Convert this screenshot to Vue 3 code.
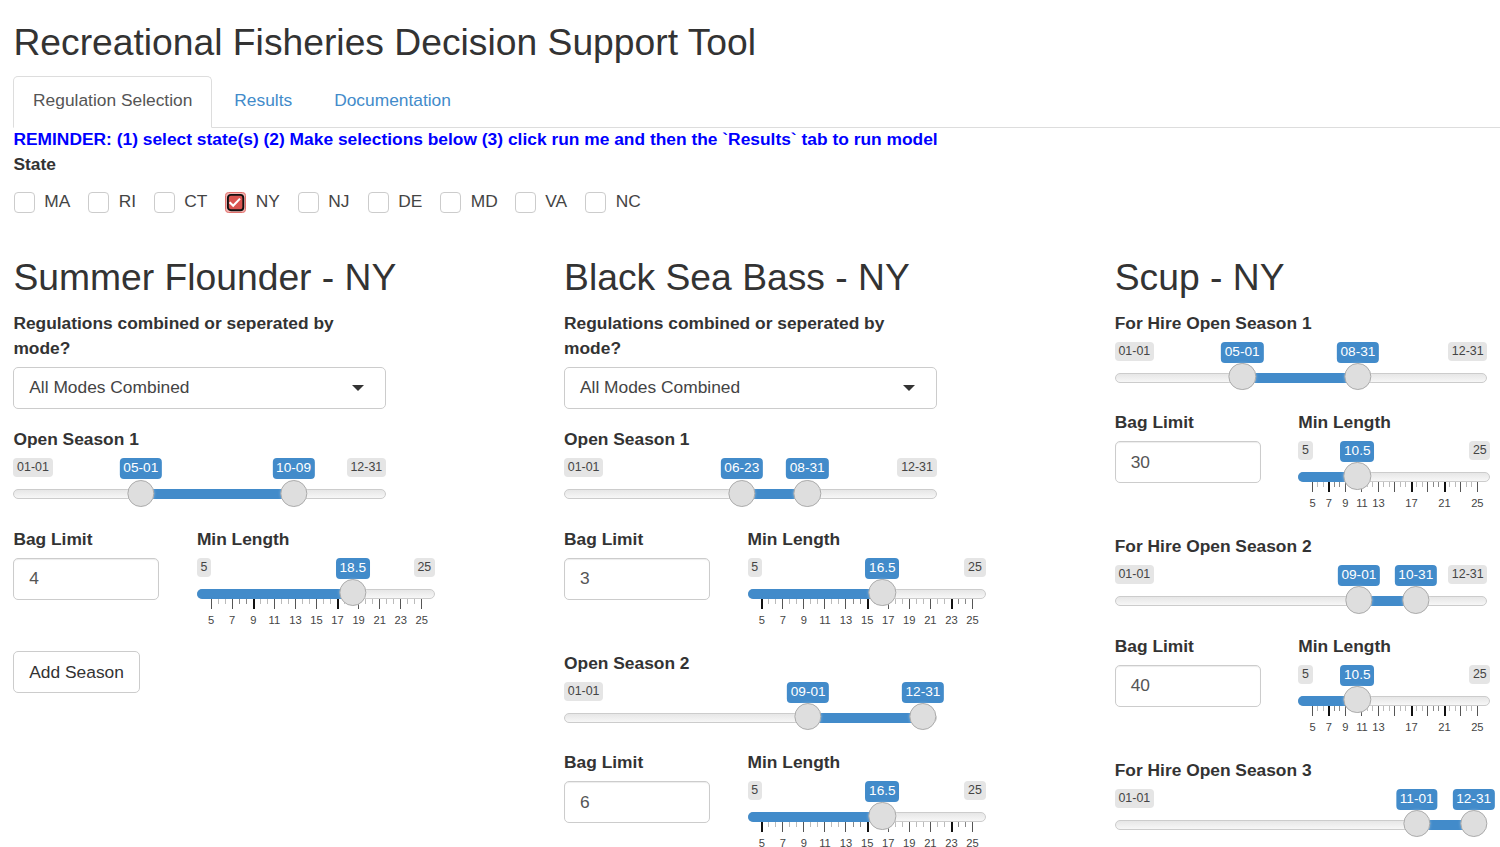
<script setup>
const states = ['MA', 'RI', 'CT', 'NY', 'NJ', 'DE', 'MD', 'VA', 'NC']
const selectedState = 'NY'

const monthStart = [0, 31, 59, 90, 120, 151, 181, 212, 243, 273, 304, 334]
const dayFraction = (date) => {
  const [month, day] = date.split('-').map(Number)
  return (monthStart[month - 1] + day - 1) / 364
}

const HANDLE = 27.3
const at = (fraction) => `calc(${HANDLE / 2}px + (100% - ${HANDLE}px) * ${fraction})`
const span = (a, b) => `calc((100% - ${HANDLE}px) * ${b - a})`
const lengthFraction = (v) => (v - 5) / 20

const makeTicks = (strong, denser) => {
  const ticks = []
  for (let i = 0; i <= 30; i++) {
    const value = 5 + (i * 2) / 3
    const major = i % 3 === 0
    const rounded = Math.round(value)
    ticks.push({
      pos: i / 30,
      major,
      strong: major && strong.includes(rounded),
      denser: !major && denser.includes(Math.floor(i / 3)),
    })
  }
  return ticks
}

const odd = [5, 7, 9, 11, 13, 15, 17, 19, 21, 23, 25]
const sparse = [5, 7, 9, 11, 13, 17, 21, 25]

const species = [
  {
    name: 'Summer Flounder',
    mode: true,
    addButton: true,
    wide: true,
    ticks: makeTicks([9, 17], [1]),
    labels: odd,
    seasons: [{ label: 'Open Season 1', from: '05-01', to: '10-09', bag: 4, length: 18.5 }],
  },
  {
    name: 'Black Sea Bass',
    mode: true,
    wide: true,
    ticks: makeTicks([5, 15, 23], [4, 9]),
    labels: odd,
    seasons: [
      { label: 'Open Season 1', from: '06-23', to: '08-31', bag: 3, length: 16.5 },
      { label: 'Open Season 2', from: '09-01', to: '12-31', bag: 6, length: 16.5 },
    ],
  },
  {
    name: 'Scup',
    ticks: makeTicks([7, 17, 21], [1, 7]),
    labels: sparse,
    seasons: [
      { label: 'For Hire Open Season 1', from: '05-01', to: '08-31', bag: 30, length: 10.5 },
      { label: 'For Hire Open Season 2', from: '09-01', to: '10-31', bag: 40, length: 10.5 },
      { label: 'For Hire Open Season 3', from: '11-01', to: '12-31' },
    ],
  },
]
</script>

<template>
  <div class="page">
    <h2 class="title">Recreational Fisheries Decision Support Tool</h2>
    <nav class="tabs">
      <a class="tab active">Regulation Selection</a>
      <a class="tab">Results</a>
      <a class="tab">Documentation</a>
    </nav>
    <div class="reminder">REMINDER: (1) select state(s) (2) Make selections below (3) click run me and then the `Results` tab to run model</div>
    <div class="label state-label">State</div>
    <div class="states">
      <div v-for="s in states" :key="s" class="state">
        <span class="box" :class="{ checked: s === selectedState }">
          <svg v-if="s === selectedState" viewBox="0 0 21 21" width="21" height="21">
            <rect x="0.5" y="0.5" width="20" height="20" rx="3" fill="#f3b5b3" stroke="#e0706c" />
            <rect x="2.9" y="2.9" width="15.4" height="15.4" rx="3" fill="#d9534f" stroke="#111" stroke-width="1.9" />
            <path d="M4.6 10.2l3.6 3.6 6.8-7.2" fill="none" stroke="#fff" stroke-width="2.1" />
          </svg>
        </span>
        <span class="state-name">{{ s }}</span>
      </div>
    </div>

    <div class="columns">
      <section v-for="sp in species" :key="sp.name" class="column">
        <h2 class="heading">{{ sp.name }} - NY</h2>

        <div v-if="sp.mode" class="group">
          <div class="label">Regulations combined or seperated by<br>mode?</div>
          <div class="select">
            <span>All Modes Combined</span>
            <svg class="caret" viewBox="0 0 12 6" width="12" height="6"><path d="M0 0h12L6 6z" fill="#333" /></svg>
          </div>
        </div>

        <template v-for="season in sp.seasons" :key="season.label">
          <div class="group">
            <div class="label">{{ season.label }}</div>
            <div class="slider">
              <span class="bound low">01-01</span>
              <span v-if="season.to !== '12-31'" class="bound high">12-31</span>
              <div class="track"></div>
              <div class="bar" :style="{ left: at(dayFraction(season.from)), width: span(dayFraction(season.from), dayFraction(season.to)) }"></div>
              <span class="value" :style="{ left: at(dayFraction(season.from)) }">{{ season.from }}</span>
              <span class="value" :style="{ left: at(dayFraction(season.to)) }">{{ season.to }}</span>
              <i class="handle" :style="{ left: at(dayFraction(season.from)) }"></i>
              <i class="handle" :style="{ left: at(dayFraction(season.to)) }"></i>
            </div>
          </div>

          <div v-if="season.bag" class="limits">
            <div class="bag">
              <div class="label">Bag Limit</div>
              <div class="input">{{ season.bag }}</div>
            </div>
            <div class="length" :class="{ wide: sp.wide }">
              <div class="label">Min Length</div>
              <div class="slider gridded">
                <span class="bound low">5</span>
                <span class="bound high">25</span>
                <div class="track"></div>
                <div class="bar start" :style="{ width: at(lengthFraction(season.length)) }"></div>
                <i
                  v-for="(t, i) in sp.ticks"
                  :key="i"
                  class="tick"
                  :class="{ major: t.major, strong: t.strong, denser: t.denser }"
                  :style="{ left: at(t.pos) }"
                ></i>
                <span v-for="n in sp.labels" :key="n" class="tick-label" :style="{ left: at(lengthFraction(n)) }">{{ n }}</span>
                <span class="value" :style="{ left: at(lengthFraction(season.length)) }">{{ season.length }}</span>
                <i class="handle" :style="{ left: at(lengthFraction(season.length)) }"></i>
              </div>
            </div>
          </div>
        </template>

        <button v-if="sp.addButton" class="button">Add Season</button>
      </section>
    </div>
  </div>
</template>

<style>
body {
  margin: 0;
  overflow: hidden;
  background: #fff;
}
</style>

<style scoped>
.page {
  box-sizing: border-box;
  width: 1500px;
  height: 847px;
  overflow: hidden;
  padding: 22.4px 0 0 13.4px;
  font-family: "Liberation Sans", Arial, sans-serif;
  font-size: 17.38px;
  line-height: 24.83px;
  color: #333;
}
.title,
.heading {
  margin: 0 0 12.4px;
  font-size: 37.25px;
  line-height: 41px;
  font-weight: 400;
  white-space: nowrap;
}
.title {
  margin-bottom: 12.8px;
}
.heading {
  margin-bottom: 13px;
}
.tabs {
  box-sizing: border-box;
  display: flex;
  gap: 2.6px;
  height: 51.6px;
  border-bottom: 1px solid #ddd;
}
.tab {
  box-sizing: border-box;
  height: 51.6px;
  padding: 11.2px 18.7px 0;
  border: 1px solid transparent;
  color: #428bca;
}
.tab.active {
  border-color: #ddd;
  border-bottom-color: #fff;
  border-radius: 5px 5px 0 0;
  background: #fff;
  color: #555;
}
.reminder {
  margin-top: -0.6px;
  color: #00f;
  font-weight: 700;
  letter-spacing: 0.01px;
  white-space: nowrap;
}
.label {
  margin-bottom: 6.2px;
  font-weight: 700;
  white-space: nowrap;
}
.state-label {
  margin-bottom: 0;
}
.states {
  display: grid;
  grid-template-columns: 74.5px 65.5px 71.5px 72.5px 70px 72.5px 74.5px 70.5px 80px;
  height: 80px;
  padding: 12px 0 0 0.3px;
  box-sizing: border-box;
}
.state {
  display: flex;
  align-items: flex-start;
  gap: 9.5px;
}
.box {
  box-sizing: border-box;
  width: 21px;
  height: 21px;
  margin-top: 3.2px;
  border: 1px solid #ccc;
  border-radius: 4px;
}
.box.checked {
  border: 0;
}
.box svg {
  display: block;
}
.state-name {
  color: #444;
}
.columns {
  display: grid;
  grid-template-columns: repeat(3, 550.7px);
}
.group,
.limits {
  margin-bottom: 18.6px;
}
.group {
  width: 372.5px;
}
.limits {
  display: flex;
  gap: 37.4px;
}
.bag {
  width: 146.1px;
}
.length {
  width: 192.2px;
}
.length.wide {
  width: 238px;
}
.select,
.input {
  box-sizing: border-box;
  display: flex;
  align-items: center;
  height: 42.2px;
  padding: 0 21px 0 14.9px;
  border: 1px solid #ccc;
  border-radius: 5px;
  color: #444;
}
.select {
  justify-content: space-between;
}
.input {
  color: #555;
  box-shadow: inset 0 1px 1px rgba(0, 0, 0, 0.075);
}
.button {
  box-sizing: border-box;
  height: 42.2px;
  padding: 0 14.9px;
  border: 1px solid #ccc;
  border-radius: 5px;
  background: #fff;
  font: inherit;
  color: #333;
}
.slider {
  position: relative;
  height: 49.7px;
}
.slider.gridded {
  height: 74.5px;
}
.track,
.bar {
  position: absolute;
  box-sizing: border-box;
  top: 31px;
  height: 10px;
}
.track {
  left: 0;
  right: 0;
  border: 1px solid #ccc;
  border-radius: 10px;
  background: linear-gradient(#dedede -50%, #fff 150%);
}
.bar {
  background: #428bca;
}
.bar.start {
  left: 0;
  border-radius: 10px 0 0 10px;
}
.handle {
  position: absolute;
  box-sizing: border-box;
  top: 21.2px;
  width: 27.3px;
  height: 27.3px;
  border: 1px solid #ababab;
  border-radius: 50%;
  background: #dedede;
  box-shadow: 0 0 3px rgba(255, 255, 255, 0.3);
  transform: translateX(-50%);
}
.bound,
.value {
  position: absolute;
  top: 0;
  padding: 0 3.7px;
  border-radius: 4px;
  white-space: nowrap;
}
.bound {
  height: 19px;
  background: #e5e5e5;
  color: #444;
  font-size: 12.42px;
  line-height: 18.4px;
}
.bound.low {
  left: 0;
}
.bound.high {
  right: 0;
}
.value {
  height: 21px;
  background: #428bca;
  color: #fff;
  font-size: 13.66px;
  line-height: 19.6px;
  transform: translateX(-50%);
}
.tick {
  position: absolute;
  top: 41px;
  width: 1px;
  height: 5px;
  background: #bbb;
}
.tick.denser {
  background: #888;
}
.tick.major {
  height: 10px;
  background: #555;
}
.tick.major.strong {
  width: 2px;
  background: #111;
}
.tick-label {
  position: absolute;
  top: 57px;
  margin-left: 0.6px;
  color: #444;
  font-size: 11.17px;
  line-height: 10px;
  transform: translateX(-50%);
}
</style>
